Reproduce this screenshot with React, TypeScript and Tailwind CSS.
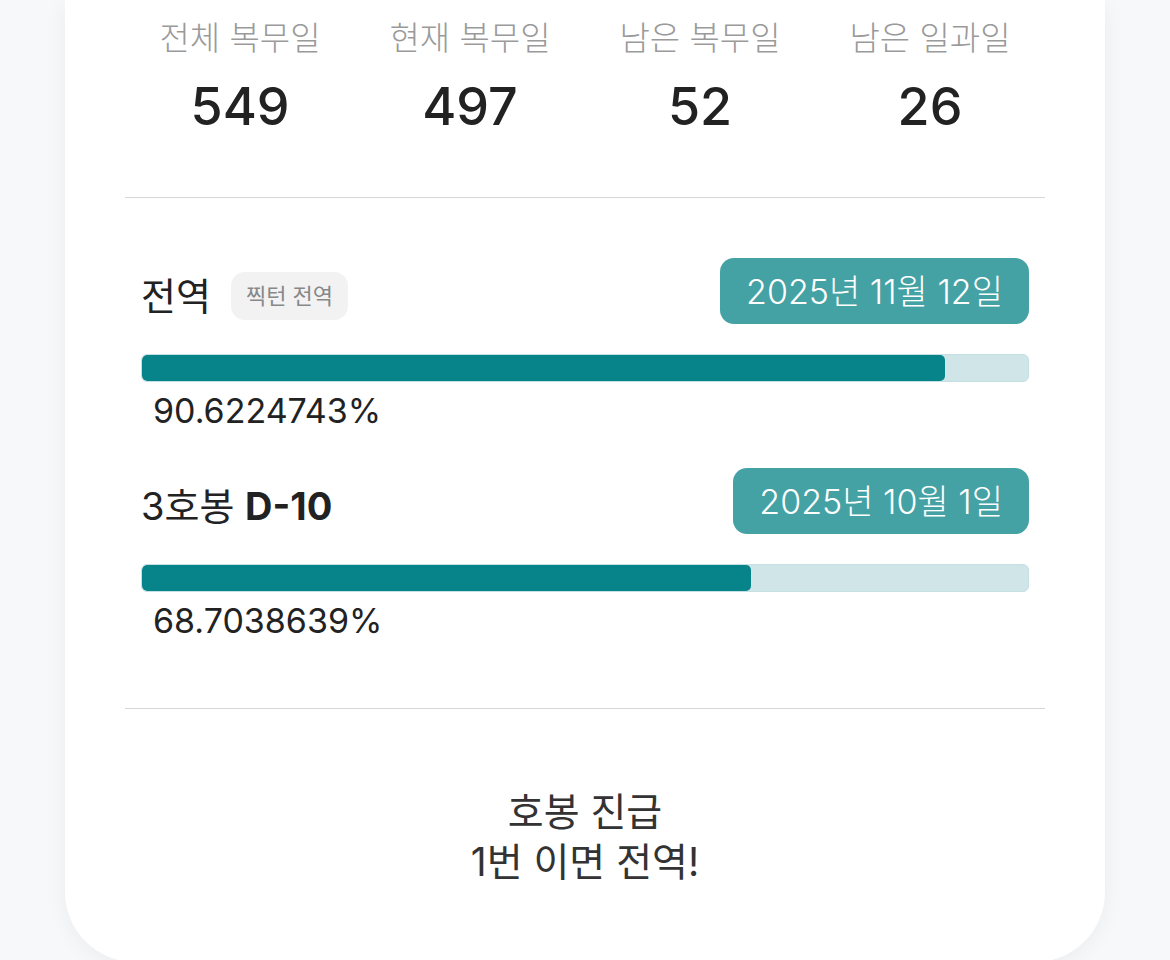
const font = { fontFamily: '"Inter", "Noto Sans CJK KR", sans-serif' };

const stats = [
  { label: "전체 복무일", value: 549 },
  { label: "현재 복무일", value: 497 },
  { label: "남은 복무일", value: 52 },
  { label: "남은 일과일", value: 26 },
];

function ProgressRow({ title, date, percent, mt }) {
  return (
    <div className={mt}>
      <div className="flex items-end justify-between">
        <div className="mb-[4px] flex h-[48px] items-center gap-[20px]">{title}</div>
        <div className="flex h-[66px] items-center rounded-[14px] bg-[#45a2a4] px-[26px] text-[34px] font-light text-white">
          {date}
        </div>
      </div>
      <div className="mt-[30px] h-[28px] overflow-hidden rounded-[6px] border border-[#c4e0e4] bg-[#cfe5e8]">
        <div className="h-full rounded-[5px] bg-[#07848a]" style={{ width: `${percent}%` }} />
      </div>
      <div className="mt-[9px] pl-[12px] text-[34px] leading-[40px] text-[#222]">{percent}%</div>
    </div>
  );
}

export default function App() {
  return (
    <div className="min-h-screen overflow-hidden bg-[#f7f8fa] px-[65px]" style={font}>
      <div className="rounded-b-[70px] bg-white px-[60px] pt-[16px] pb-[75px] shadow-[0_4px_22px_rgba(0,0,0,0.05)]">
        <div className="grid grid-cols-4 text-center">
          {stats.map((s) => (
            <div key={s.label}>
              <div className="text-[33px] font-light leading-[44px] text-[#9a9a9a]">{s.label}</div>
              <div className="mt-[17px] text-[52px] font-medium leading-[60px] text-[#222]">{s.value}</div>
            </div>
          ))}
        </div>

        <div className="mt-[60px] border-t border-[#d6d6d6]" />

        <div className="px-4">
          <ProgressRow
            mt="mt-[60px]"
            title={
              <>
                <span className="text-[38px] text-[#222]">전역</span>
                <span className="flex h-[48px] items-center rounded-[14px] bg-[#f2f2f2] px-[15px] text-[22px] text-[#888]">
                  찍턴 전역
                </span>
              </>
            }
            date="2025년 11월 12일"
            percent="90.6224743"
          />
          <ProgressRow
            mt="mt-[37px]"
            title={
              <span className="text-[38px] text-[#222]">
                3호봉 <span className="font-bold">D-10</span>
              </span>
            }
            date="2025년 10월 1일"
            percent="68.7038639"
          />
        </div>

        <div className="mt-[67px] border-t border-[#d6d6d6]" />

        <div className="mt-[78px] text-center text-[39px] leading-[50px] text-[#333]">
          <div>호봉 진급</div>
          <div>1번 이면 전역!</div>
        </div>
      </div>
    </div>
  );
}
